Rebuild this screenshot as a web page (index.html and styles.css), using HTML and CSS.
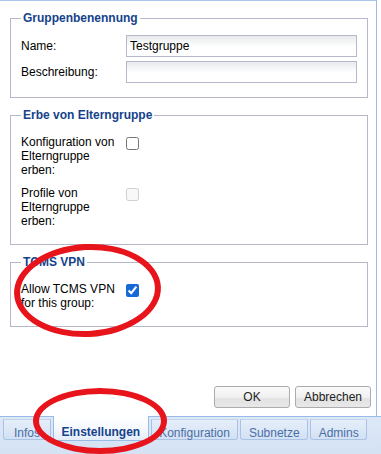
FILE: index.html
```html
<!DOCTYPE html>
<html lang="de">
<head>
  <meta charset="UTF-8" />
  <meta name="viewport" content="width=device-width, initial-scale=1.0"/>
  <title>Gruppe bearbeiten</title>
  <link rel="stylesheet" href="styles.css">
</head>
<body>
  <div class="window">
    <div class="panel">
      <fieldset class="group">
        <legend>Gruppenbenennung</legend>
        <div class="row">
          <label for="name">Name:</label>
          <input type="text" id="name" value="Testgruppe">
        </div>
        <div class="row">
          <label for="beschreibung">Beschreibung:</label>
          <input type="text" id="beschreibung">
        </div>
      </fieldset>

      <fieldset class="group checks">
        <legend>Erbe von Elterngruppe</legend>
        <div class="row check">
          <label for="erbeKonfig">Konfiguration von Elterngruppe erben:</label>
          <input type="checkbox" id="erbeKonfig">
        </div>
        <div class="row check">
          <label for="erbeProfile">Profile von Elterngruppe erben:</label>
          <input type="checkbox" id="erbeProfile" disabled>
        </div>
      </fieldset>

      <fieldset class="group checks">
        <legend>TCMS VPN</legend>
        <div class="row check">
          <label for="vpn">Allow TCMS VPN for this group:</label>
          <input type="checkbox" id="vpn" checked>
        </div>
      </fieldset>

      <div class="actions">
        <button>OK</button>
        <button>Abbrechen</button>
      </div>
    </div>

    <div class="tabs">
      <div class="tab">Infos</div>
      <div class="tab active">Einstellungen</div>
      <div class="tab">Konfiguration</div>
      <div class="tab">Subnetze</div>
      <div class="tab">Admins</div>
    </div>

    <!-- Markierungen -->
    <div class="mark mark-vpn"></div>
    <div class="mark mark-tab"></div>
  </div>
</body>
</html>
```

FILE: styles.css
```css
body {
  margin: 0;
  font-family: "Liberation Sans", Arial, sans-serif;
  font-size: 12px;
  color: #000;
  background: #fff;
}

.window {
  position: relative;
  width: 381px;
  height: 454px;
  overflow: hidden;
  display: flex;
  flex-direction: column;
}

.panel {
  width: 377px;
  height: 416px;
  box-sizing: border-box;
  border-top: 1px solid #a9c6ee;
  border-right: 1px solid #99bbe8;
  padding: 0 5px 8px 10px;
  display: flex;
  flex-direction: column;
  background: #fff;
}

.group {
  margin: 10px 3px 0 0;
  padding: 10px 10px 14px;
  border: 1px solid #b5b8c8;
  min-width: 0;
}

.group legend {
  padding: 0 2px;
  font-weight: bold;
  line-height: 14px;
  color: #15428b;
}

.checks {
  padding: 13px 10px 16px;
}

.row {
  display: flex;
  align-items: center;
}

.row + .row {
  margin-top: 4px;
}

.row label {
  flex: none;
  width: 105px;
}

.row input[type="text"] {
  flex: 1;
  height: 22px;
  box-sizing: border-box;
  border: 1px solid #b5b8c8;
  padding: 0 3px;
  font-family: inherit;
  font-size: 12px;
  background: linear-gradient(#e8eaec, #fff 55%);
  outline: none;
}

.check {
  align-items: flex-start;
}

.check + .check {
  margin-top: 9px;
}

.check label {
  width: 100px;
  padding-right: 5px;
  line-height: 14px;
}

.check input {
  margin: 2px 0 0;
  width: 13px;
  height: 13px;
  accent-color: #1769d8;
}

.actions {
  margin-top: auto;
  display: flex;
  justify-content: flex-end;
  gap: 5px;
}

.actions button {
  width: 76px;
  height: 22px;
  border: 1px solid #acacac;
  border-radius: 3px;
  background: linear-gradient(#fbfbfb, #efefef 55%, #e2e2e2 58%, #e8e8e8);
  font-family: inherit;
  font-size: 12px;
  color: #222;
  cursor: pointer;
}

.tabs {
  flex: 1;
  display: flex;
  align-items: flex-start;
  gap: 2px;
  padding-left: 3px;
  border-top: 1px solid #99bbe8;
  background: linear-gradient(#dde8f7, #d4e2f4);
}

.tab {
  margin-top: 2px;
  height: 21px;
  min-width: 48px;
  box-sizing: border-box;
  padding: 6px 7.5px 0;
  line-height: 14px;
  text-align: center;
  white-space: nowrap;
  color: #4a6ea5;
  border: 1px solid #a9c3e6;
  border-top-color: #c2d5ef;
  border-radius: 0 0 3px 3px;
  background: linear-gradient(#e6eefa, #d3e1f4);
}

.tab.active {
  margin-top: -1px;
  height: 25px;
  padding-top: 9px;
  font-weight: bold;
  color: #15428b;
  border-color: #99bbe8;
  border-top: none;
  background: linear-gradient(#fff, #f3f7fd 60%, #e3ecf8);
}

.mark {
  position: absolute;
  border: 6px solid #e8141c;
  border-radius: 50%;
  box-sizing: border-box;
}

.mark-vpn {
  left: 14px;
  top: 244px;
  width: 147px;
  height: 93px;
  transform: rotate(-3deg);
}

.mark-tab {
  left: 33px;
  top: 388px;
  width: 134px;
  height: 66px;
}
```
